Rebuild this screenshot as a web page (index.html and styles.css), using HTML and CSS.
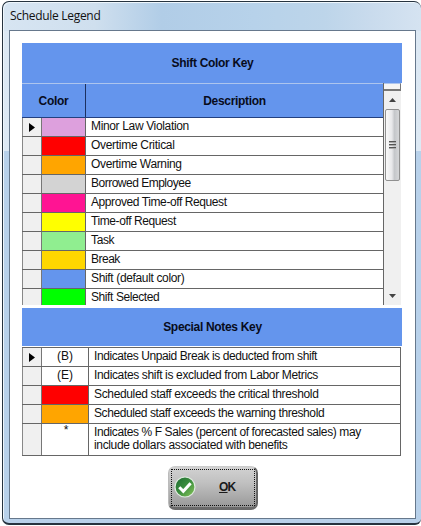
FILE: index.html
```html
<!DOCTYPE html>
<html lang="en">
<head>
<meta charset="utf-8">
<title>Schedule Legend</title>
<link rel="stylesheet" href="styles.css">
</head>
<body>
<div class="window">
  <header class="titlebar">Schedule Legend</header>
  <main class="client">
    <h2 class="band">Shift Color Key</h2>
    <section class="shifts">
      <div class="list">
        <div class="head"><div>Color</div><div>Description</div></div>
        <div class="row"><i class="sel"><svg width="6" height="9" viewBox="0 0 6 9"><path d="M0 0L6 4.5L0 9Z"/></svg></i><b class="plum"></b><span>Minor Law Violation</span></div>
        <div class="row"><i></i><b class="red"></b><span class="loose">Overtime Critical</span></div>
        <div class="row"><i></i><b class="orange"></b><span>Overtime Warning</span></div>
        <div class="row"><i></i><b class="gray"></b><span class="tight">Borrowed Employee</span></div>
        <div class="row"><i></i><b class="pink"></b><span class="snug">Approved Time-off Request</span></div>
        <div class="row"><i></i><b class="yellow"></b><span class="snug">Time-off Request</span></div>
        <div class="row"><i></i><b class="mint"></b><span>Task</span></div>
        <div class="row"><i></i><b class="gold"></b><span class="tight">Break</span></div>
        <div class="row"><i></i><b class="blue"></b><span>Shift (default color)</span></div>
        <div class="row"><i></i><b class="lime"></b><span class="snug">Shift Selected</span></div>
      </div>
      <div class="scroll">
        <div class="split"></div>
        <div class="arrow"><svg width="7" height="4" viewBox="0 0 7 4"><path d="M0 4L3.5 0L7 4Z"/></svg></div>
        <div class="thumb"><svg width="7" height="9" viewBox="0 0 7 9"><path d="M0 .5H7M0 3.5H7M0 6.5H7" stroke="#555"/><path d="M0 1.5H7M0 4.5H7M0 7.5H7" stroke="#aaa"/></svg></div>
        <div class="arrow down"><svg width="7" height="4" viewBox="0 0 7 4"><path d="M0 0L3.5 4L7 0Z"/></svg></div>
      </div>
    </section>
    <h2 class="band second">Special Notes Key</h2>
    <section class="notes">
      <div class="row"><i class="sel"><svg width="6" height="9" viewBox="0 0 6 9"><path d="M0 0L6 4.5L0 9Z"/></svg></i><b>(B)</b><span class="snug">Indicates Unpaid Break is deducted from shift</span></div>
      <div class="row"><i></i><b>(E)</b><span>Indicates shift is excluded from Labor Metrics</span></div>
      <div class="row"><i></i><b class="red"></b><span>Scheduled staff exceeds the critical threshold</span></div>
      <div class="row"><i></i><b class="orange"></b><span class="snug">Scheduled staff exceeds the warning threshold</span></div>
      <div class="row tall"><i></i><b>*</b><span><span class="line">Indicates % F Sales (percent of forecasted sales) may</span><br>include dollars associated with benefits</span></div>
    </section>
    <button class="ok">
      <svg width="22" height="22" viewBox="0 0 22 22">
        <defs><linearGradient id="g" x1="0" y1="0" x2="1" y2="1"><stop offset="0" stop-color="#1d6a31"/><stop offset=".5" stop-color="#3d8f3f"/><stop offset="1" stop-color="#8cc85a"/></linearGradient></defs>
        <circle cx="11" cy="11" r="10" fill="url(#g)" stroke="#dfeadf" stroke-width="1.2"/>
        <path d="M5.3 11.3L9.3 15.3L16.6 7.2" fill="none" stroke="#fff" stroke-width="3"/>
      </svg>
      <span><u>O</u>K</span>
    </button>
  </main>
</div>
</body>
</html>
```
FILE: styles.css
```css
* { box-sizing: border-box; }
body {
  margin: 0;
  width: 421px;
  height: 526px;
  overflow: hidden;
  background: #fff;
  font: 12px/14px "Liberation Sans", Arial, sans-serif;
  color: #111;
}
.window {
  width: 419px;
  height: 524px;
  margin: 1px 0 0 2px;
  padding: 0 4px 6px 6px;
  border: 1px solid #26333f;
  border-right: 0;
  border-bottom-width: 2px;
  border-radius: 7px 7px 6px 7px;
  box-shadow: inset 1px 1px #eef6fc;
  background:
    linear-gradient(#dce8f3, #dde9f4) 0 29px / 100% 120px no-repeat,
    linear-gradient(90deg, #d7e5f2 0, #cfdfee 22%, #b1cde7 38%, #b7d2ea 60%, #bdd5ea 77%, #c9dbed 88%, #d5e3f1 100%) 0 0 / 100% 29px no-repeat,
    #b8d1ea;
}
.titlebar {
  height: 28px;
  padding: 7px 0 0 1px;
  font: 12px/14px "Open Sans", "Noto Sans", sans-serif;
  letter-spacing: -.3px;
}
.client {
  display: flex;
  flex-direction: column;
  width: 407px;
  height: 489px;
  padding: 12px 12px 0;
  border: 1px solid #66788c;
  background: #fff;
}
.band {
  display: flex;
  align-items: center;
  justify-content: center;
  width: 380px;
  height: 40px;
  margin: 0;
  padding-left: 1px;
  background: #6495ed;
  font-size: 12px;
  letter-spacing: -.32px;
  color: #080c1c;
}
.shifts {
  display: flex;
  width: 379px;
  height: 222px;
  overflow: hidden;
}
.list {
  width: 362px;
  flex: none;
  border-right: 1px solid #666;
}
.head {
  display: flex;
  height: 35px;
  border-top: 1px solid #adc5ee;
  border-bottom: 1px solid #23407f;
  background: #6495ed;
  font-weight: bold;
  color: #080c1c;
}
.head div {
  flex: 1;
  padding-top: 10px;
  text-align: center;
  letter-spacing: -.3px;
}
.head div:first-child { flex: 0 0 64px; border-right: 1px solid #1c3060; }
.row {
  display: flex;
  height: 19px;
  border-bottom: 1px solid #666;
}
.row i {
  display: flex;
  align-items: center;
  justify-content: center;
  width: 20px;
  border-left: 1px solid #888;
  border-right: 1px solid #777;
  background: #f0f0f0;
}
.row b {
  width: 44px;
  border-right: 1px solid #666;
  font-weight: normal;
  text-align: center;
}
.row > span {
  padding: 1px 0 0 5px;
  letter-spacing: -.35px;
  white-space: nowrap;
}
.row .loose { letter-spacing: -.3px; }
.row .snug { letter-spacing: -.41px; }
.row .tight { letter-spacing: -.5px; }
.row .line { letter-spacing: -.39px; }
.row .plum { background: #dda0dd; }
.row .red { background: #f00; }
.row .orange { background: #ffa500; }
.row .gray { background: #d3d3d3; }
.row .pink { background: #ff1493; }
.row .yellow { background: #ff0; }
.row .mint { background: #90ee90; }
.row .gold { background: #ffd700; }
.row .blue { background: #6495ed; }
.row .lime { background: #0f0; }
.scroll {
  display: flex;
  flex-direction: column;
  width: 17px;
  background: #f0f0f0;
}
.split {
  height: 8px;
  border: 1px solid #777;
  border-color: #adc5ee #777 #777;
  border-width: 1px 1px 2px 0;
  background: #f4f4f4;
}
.arrow {
  display: flex;
  align-items: center;
  justify-content: center;
  height: 18px;
  fill: #444;
}
.thumb {
  display: flex;
  align-items: center;
  justify-content: center;
  width: 15px;
  height: 72px;
  margin-left: 1px;
  border: 1px solid #909090;
  border-radius: 2px;
  background: linear-gradient(90deg, #fafafa, #e8e8ea 45%, #c5c7ca 65%, #d5d6d8);
}
.down { margin-top: auto; }
.second { height: 38px; margin-top: 3px; }
.notes {
  width: 379px;
  margin-top: 1px;
  border: 1px solid #666;
  border-left: 0;
}
.notes b { width: 47px; padding-top: 1px; }
.notes .tall { height: 31px; border-bottom: 0; }
.notes .tall > span { padding-top: 2px; line-height: 13px; }
.notes .tall b { padding: 0 0 0 2px; line-height: 13px; }
.ok {
  position: relative;
  display: flex;
  align-items: center;
  width: 90px;
  height: 44px;
  margin: 10px 0 0 146px;
  padding: 0 0 0 5px;
  border: 1px solid #a8a8a8;
  border-width: 1px 2px 3px 1px;
  border-color: #ccc #666 #6a6a6a #bbb;
  border-radius: 7px;
  background: linear-gradient(#d2d2d2, #c0c0c0 40%, #999);
  font: bold 12px/14px "Liberation Sans", Arial, sans-serif;
  color: #1a1a1a;
}
.ok::before {
  content: "";
  position: absolute;
  inset: 2px 1px 1px 2px;
  border: 1px dotted #111;
}
.ok span { margin-left: 23px; letter-spacing: -.8px; }
.ok u { text-underline-offset: 1px; }
```
